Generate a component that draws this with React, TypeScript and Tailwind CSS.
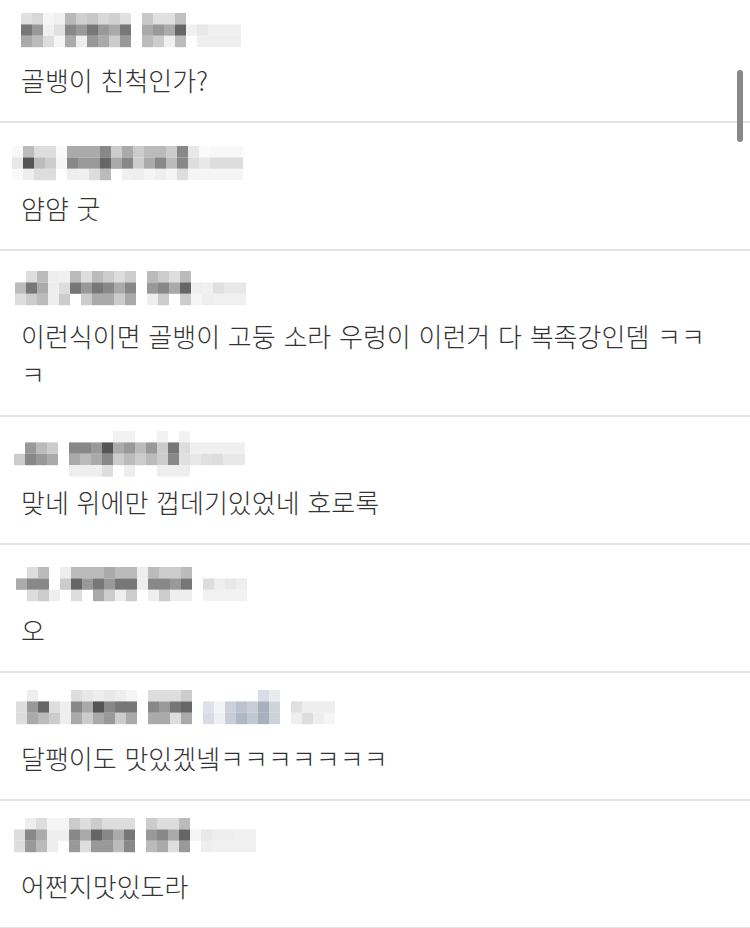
import React from "react";

type Row = { x0: number; dy: number; cells: string[]; text: string };

const rows: Row[] = [
  {
    x0: 21,
    dy: -4,
    cells: [
      "e0 d8 f5 f0 b8 d0 c8 d8 d0 e0 ff c8 e0 e0 c0",
      "77 99 f0 e0 88 99 77 99 aa 77 ff aa 99 aa 66 f0 e8 f0 f0 f0",
      "aa bb dd f5 aa ee 99 aa cc 99 ff bb cc f0 bb ff ee ee ee ee",
    ],
    text: "골뱅이 친척인가?",
  },
  {
    x0: 12,
    dy: 1,
    cells: [
      "f8 bb dd dd fa aa aa aa 88 cc aa cc bb bb cc 88 e8 fa f8 f8 f8",
      "e8 55 bb cc f5 88 99 99 66 aa 88 cc aa 88 bb 88 dd e8 dd dd dd",
      "fa ee dd dd ff ee f0 dd bb ff f0 ee f5 ee f5 dd f5 f5 f5 f5 f5",
    ],
    text: "얌얌 굿",
  },
  {
    x0: 15,
    dy: -2,
    cells: [
      "ff dd bb ee f0 bb dd bb cc dd cc ff bb cc dd bb",
      "bb 77 aa ee dd 77 99 77 88 aa 88 ff 99 88 aa 66 ee f0 e0 e8 e8",
      "dd cc bb ee cc ff cc aa aa cc aa ff ee cc ff cc f5 ee f0 f0 f0",
    ],
    text: "이런식이면 골뱅이 고둥 소라 우렁이 이런거 다 복족강인뎀 ㅋㅋㅋ",
  },
  {
    x0: 14,
    dy: -8,
    cells: [
      "ff ff ff ff ff ff ff ff ff f2 f2 ff ff f2 ff f2",
      "ff 99 bb cc ff 88 88 99 55 aa 99 bb 99 cc 77 dd f0 f0 f0 f0 f0",
      "cc 88 99 aa ff aa bb aa 88 cc bb cc bb cc 88 e0 e8 e0 dd e8 e8",
      "ff ff ff ff ff ee ee ee dd ff ee ff ff ee ee ee",
    ],
    text: "맞네 위에만 껍데기있었네 호로록",
  },
  {
    x0: 16,
    dy: 0,
    cells: [
      "ff dd bb ff ee bb bb bb aa bb bb ee bb cc cc bb",
      "aa 88 88 ff cc 66 99 77 99 77 77 ee 88 88 99 77 ff dd ee e8 ee",
      "ff dd cc ee ff dd ff aa cc ee cc ff ee cc ee ee ff f2 f2 f2 f2",
    ],
    text: "오",
  },
  {
    x0: 16,
    dy: -5,
    cells: [
      "ff ee ff ff ff dd e8 ee e8 ee f5 ff dd dd dd cc ff ff ff ff ff ff #d8dde5 #e8ecf0",
      "dd 99 66 dd ee 88 aa 55 88 77 77 ff 88 99 77 66 ff #dde1e8 #f2f4f7 #ccd1d9 #bcc3ce #c8cdd5 #a8b0bc #cfd4da ff e0 ee ee ee",
      "dd aa bb cc ee aa cc aa 99 cc aa ff aa aa dd aa ff #d8dde5 #eef0f3 #c8ced8 #b0b8c4 #c0c8d2 #a8b0bc #ccd2da ff ee dd ee f5",
    ],
    text: "달팽이도 맛있겠넼ㅋㅋㅋㅋㅋㅋㅋ",
  },
  {
    x0: 14,
    dy: -5,
    cells: [
      "ff ee dd f5 f5 cc dd cc dd dd dd ff cc dd dd bb",
      "dd 88 aa ee ee 88 aa 66 88 aa 77 ff 99 88 aa 66 f5 e8 ee ee f0 f0",
      "dd 99 bb ee ff 99 dd 99 99 bb 88 ff bb aa dd 99 ff ee f0 f0 f0 f0",
    ],
    text: "어쩐지맛있도라",
  },
];

function toColor(v: string): string | null {
  if (v === "ff") return null;
  if (v.startsWith("#")) return v;
  return `#${v}${v}${v}`;
}

function Mosaic({ x0, dy, cells }: { x0: number; dy: number; cells: string[] }) {
  const cw = 11;
  const ch = 11.4;
  return (
    <svg width={750} height={35} className="block overflow-visible" viewBox="0 0 750 35">
      {cells.map((line, r) =>
        line
          .trim()
          .split(/\s+/)
          .map((v, c) => {
            const col = toColor(v);
            if (!col) return null;
            return (
              <rect
                key={`${r}-${c}`}
                x={x0 + c * cw}
                y={dy + r * ch}
                width={cw}
                height={ch}
                fill={col}
              />
            );
          })
      )}
    </svg>
  );
}

export default function App() {
  return (
    <div className="relative w-[750px] h-[928px] overflow-hidden bg-white">
      <div className="flex flex-col -mt-[5px]">
        {rows.map((row, i) => (
          <div key={i} className="border-b-2 border-[#e4e4e4] pt-[22px] pb-[22px]">
            <Mosaic x0={row.x0} dy={row.dy} cells={row.cells} />
            <p
              className="mt-[9px] pl-[21px] pr-[32px] text-[26px] leading-[38px] font-light [word-spacing:2px] text-[#333333]"
              style={{ fontFamily: '"Noto Sans CJK KR", "Noto Sans", sans-serif' }}
            >
              {row.text}
            </p>
          </div>
        ))}
      </div>
      <div className="absolute left-[737px] top-[70px] w-[6px] h-[72px] rounded-full bg-[#888888]" />
    </div>
  );
}
